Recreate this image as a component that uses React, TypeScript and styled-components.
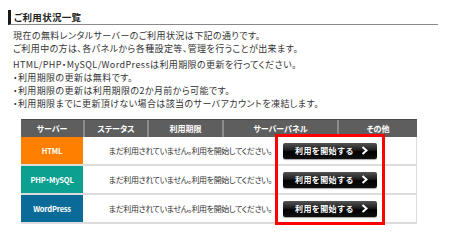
import React from "react";
import styled, { createGlobalStyle } from "styled-components";

const GlobalStyle = createGlobalStyle`
  html, body {
    margin: 0;
    padding: 0;
    background: #fff;
  }
  body {
    font-family: "Noto Sans CJK JP", "Noto Sans", sans-serif;
    color: #333;
    font-feature-settings: "palt";
  }
`;

const Page = styled.div`
  width: 450px;
  height: 244px;
  padding: 10px 12px 0 8px;
  box-sizing: border-box;
  overflow: hidden;
`;

const Heading = styled.h2`
  margin: 0;
  height: 14px;
  border-left: 3px solid #1a1a1a;
  border-bottom: 1px solid #8a8a8a;
  padding-left: 3px;
  font-size: 9.5px;
  line-height: 14px;
  font-weight: 700;
  color: #222;
  letter-spacing: 0.3px;
`;

const Paragraph = styled.p<{ $gap: number }>`
  margin: ${({ $gap }) => $gap}px 0 0 5px;
  font-size: 9px;
  line-height: 13px;
  color: #333;
  letter-spacing: 0.4px;
`;

const TableWrap = styled.div`
  position: relative;
  margin: 9px 0 0 13px;
  width: 396px;
`;

const HeaderRow = styled.div`
  display: grid;
  grid-template-columns: 62px 64px 75px 115px 80px;
  height: 18px;
  background: #5e5e5e;
  border-top: 1px solid #4a4a4a;
  box-sizing: border-box;
`;

const HeaderCell = styled.div<{ $first?: boolean }>`
  display: flex;
  align-items: center;
  justify-content: center;
  color: #fff;
  font-size: 8px;
  font-weight: 700;
  border-left: ${({ $first }) => ($first ? "none" : "2px solid #8c8c8c")};
`;

const BodyRow = styled.div`
  display: grid;
  grid-template-columns: 62px 193px 101px 40px;
  height: 29px;
  border-bottom: 2px solid #dcdcdc;
  border-right: 1px solid #dcdcdc;
  box-sizing: border-box;
`;

const ServerCell = styled.div<{ $color: string }>`
  display: flex;
  align-items: center;
  justify-content: center;
  background: ${({ $color }) => $color};
  color: #fff;
  font-size: 7.5px;
  font-weight: 700;
  letter-spacing: -0.2px;
`;

const MessageCell = styled.div`
  display: flex;
  align-items: center;
  justify-content: flex-end;
  padding-right: 4px;
  font-size: 8px;
  color: #333;
  white-space: nowrap;
  letter-spacing: -0.4px;
`;

const ButtonCell = styled.div`
  display: flex;
  align-items: center;
  padding-left: 7px;
`;

const StartButton = styled.button`
  display: flex;
  align-items: center;
  justify-content: space-between;
  width: 94px;
  height: 16px;
  padding: 0 9px 0 12px;
  border: none;
  border-radius: 2px;
  background: linear-gradient(#555 0%, #1c1c1c 45%, #000 55%, #111 100%);
  box-shadow: 0 1px 1px rgba(0, 0, 0, 0.35);
  color: #fff;
  font-family: inherit;
  font-size: 8px;
  font-weight: 700;
  letter-spacing: 0.4px;
  cursor: pointer;
`;

const Highlight = styled.div`
  position: absolute;
  left: 254px;
  top: 15px;
  width: 110px;
  height: 91px;
  border: 3px solid #ff0000;
  box-sizing: border-box;
  pointer-events: none;
`;

const Chevron = () => (
  <svg width="7" height="9" viewBox="0 0 7 9">
    <polyline points="1.5,1 5.5,4.5 1.5,8" fill="none" stroke="#fff" strokeWidth="2" />
  </svg>
);

const servers = [
  { name: "HTML", color: "#ff8000" },
  { name: "PHP・MySQL", color: "#0ba090" },
  { name: "WordPress", color: "#0b6b98" },
];

const headers = ["サーバー", "ステータス", "利用期限", "サーバーパネル", "その他"];

export default function App() {
  return (
    <Page>
      <GlobalStyle />
      <Heading>ご利用状況一覧</Heading>
      <Paragraph $gap={4}>
        現在の無料レンタルサーバーのご利用状況は下記の通りです。
        <br />
        ご利用中の方は、各パネルから各種設定等、管理を行うことが出来ます。
      </Paragraph>
      <Paragraph $gap={3}>
        HTML/PHP・MySQL/WordPressは利用期限の更新を行ってください。
        <br />
        ・利用期限の更新は無料です。
        <br />
        ・利用期限の更新は利用期限の2か月前から可能です。
        <br />
        ・利用期限までに更新頂けない場合は該当のサーバアカウントを凍結します。
      </Paragraph>
      <TableWrap>
        <HeaderRow>
          {headers.map((h, i) => (
            <HeaderCell key={h} $first={i === 0}>
              {h}
            </HeaderCell>
          ))}
        </HeaderRow>
        {servers.map((s) => (
          <BodyRow key={s.name}>
            <ServerCell $color={s.color}>{s.name}</ServerCell>
            <MessageCell>まだ利用されていません。利用を開始してください。</MessageCell>
            <ButtonCell>
              <StartButton>
                <span>利用を開始する</span>
                <Chevron />
              </StartButton>
            </ButtonCell>
            <div />
          </BodyRow>
        ))}
        <Highlight />
      </TableWrap>
    </Page>
  );
}
